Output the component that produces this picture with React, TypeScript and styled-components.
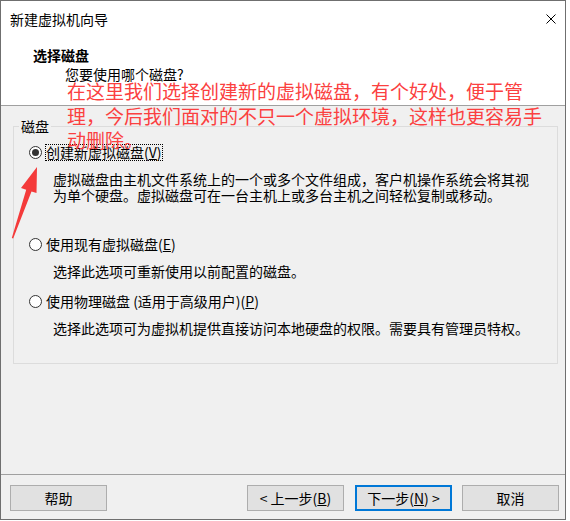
import styled, { createGlobalStyle } from "styled-components";

const GlobalStyle = createGlobalStyle`
  body {
    margin: 0;
    background: #ffffff;
    font-family: "Noto Sans CJK SC", "Noto Sans", sans-serif;
    color: #000;
  }
`;

const options = [
  {
    label: "创建新虚拟磁盘",
    key: "V",
    checked: true,
    gap: 11,
    desc: "虚拟磁盘由主机文件系统上的一个或多个文件组成，客户机操作系统会将其视为单个硬盘。虚拟磁盘可在一台主机上或多台主机之间轻松复制或移动。",
  },
  {
    label: "使用现有虚拟磁盘",
    key: "E",
    checked: false,
    gap: 33,
    desc: "选择此选项可重新使用以前配置的磁盘。",
  },
  {
    label: "使用物理磁盘 (适用于高级用户)",
    key: "P",
    checked: false,
    gap: 14,
    desc: "选择此选项可为虚拟机提供直接访问本地硬盘的权限。需要具有管理员特权。",
  },
];

const App = () => {
  return (
    <>
      <GlobalStyle />
      <Window>
        <TitleBar>
          <WindowTitle>新建虚拟机向导</WindowTitle>
          <CloseIcon width="10" height="10" viewBox="0 0 10 10">
            <path d="M0.5 0.5 L9.5 9.5 M9.5 0.5 L0.5 9.5" stroke="#000" strokeWidth="1" />
          </CloseIcon>
        </TitleBar>
        <Header>
          <Heading>选择磁盘</Heading>
          <SubHeading>您要使用哪个磁盘?</SubHeading>
        </Header>
        <Body>
          <GroupBox>
            <GroupLabel>磁盘</GroupLabel>
            {options.map((o) => (
              <Option key={o.key}>
                <OptionRow $gap={o.gap}>
                  <Radio $checked={o.checked} />
                  <OptionText $focused={o.checked}>
                    {o.label}(<u>{o.key}</u>)
                  </OptionText>
                </OptionRow>
                <Desc>{o.desc}</Desc>
              </Option>
            ))}
          </GroupBox>
        </Body>
        <Footer>
          <Button>帮助</Button>
          <Spacer />
          <Button>
            &lt; 上一步(<u>B</u>)
          </Button>
          <Button $primary>
            下一步(<u>N</u>) &gt;
          </Button>
          <Button>取消</Button>
        </Footer>

        <Annotation>
          在这里我们选择创建新的虚拟磁盘，有个好处，便于管
          <br />
          理，今后我们面对的不只一个虚拟环境，这样也更容易手
          <br />
          动删除。
        </Annotation>
        <Arrow width="60" height="250" viewBox="0 0 60 250">
          <polygon
            points="37,167 36.5,193 31.5,191.5 13.2,238.5 11.8,238 26.2,189.8 21,188"
            fill="#f43a3a"
          />
        </Arrow>
      </Window>
    </>
  );
};

export default App;

const Window = styled.div`
  position: relative;
  width: 566px;
  height: 520px;
  box-sizing: border-box;
  border: 1px solid #6f6f6f;
  background: #f0f0f0;
  display: flex;
  flex-direction: column;
  font-size: 14px;
`;

const TitleBar = styled.div`
  height: 36px;
  flex-shrink: 0;
  display: flex;
  align-items: center;
  justify-content: space-between;
  padding: 0 9px 0 9px;
  background: #fff;
`;

const WindowTitle = styled.span`
  font-size: 14px;
  line-height: 16px;
`;

const CloseIcon = styled.svg`
  display: block;
`;

const Header = styled.div`
  height: 58px;
  flex-shrink: 0;
  padding-top: 10px;
  background: #fff;
  border-bottom: 1px solid #a0a0a0;
`;

const Heading = styled.div`
  padding-left: 32px;
  font-weight: 700;
  line-height: 16px;
`;

const SubHeading = styled.div`
  padding-left: 64px;
  margin-top: 3px;
  line-height: 16px;
`;

const Body = styled.div`
  flex: 1;
  padding: 20px 0 0 12px;
`;

const GroupBox = styled.div`
  width: 545px;
  height: 238px;
  box-sizing: border-box;
  border: 1px solid #dcdcdc;
`;

const GroupLabel = styled.div`
  width: fit-content;
  margin: -8px 0 0 5px;
  padding: 0 2px;
  line-height: 14px;
  background: #f0f0f0;
`;

const Option = styled.div``;

const OptionRow = styled.div<{ $gap: number }>`
  display: flex;
  align-items: center;
  height: 17px;
  margin: ${({ $gap }) => $gap}px 0 0 15px;
`;

const Radio = styled.span<{ $checked: boolean }>`
  width: 13px;
  height: 13px;
  box-sizing: border-box;
  border-radius: 50%;
  border: 1px solid #333;
  background: #fff;
  margin-right: 3px;
  display: flex;
  align-items: center;
  justify-content: center;

  &::after {
    content: "";
    width: 7px;
    height: 7px;
    border-radius: 50%;
    background: #333;
    display: ${({ $checked }) => ($checked ? "block" : "none")};
  }
`;

const OptionText = styled.span<{ $focused: boolean }>`
  line-height: 15px;
  white-space: nowrap;
  border: 1px ${({ $focused }) => ($focused ? "dotted #000" : "solid transparent")};
`;

const Desc = styled.div`
  margin: 10px 0 0 39px;
  max-width: 482px;
  line-height: 16px;
`;

const Footer = styled.div`
  flex-shrink: 0;
  display: flex;
  gap: 11px;
  padding: 10px 6px 8px 9px;
  border-top: 1px solid #a0a0a0;
`;

const Spacer = styled.div`
  flex: 1;
`;

const Button = styled.button<{ $primary?: boolean }>`
  width: 97px;
  height: 26px;
  box-sizing: border-box;
  padding: 0;
  background: #e1e1e1;
  border: ${({ $primary }) => ($primary ? "2px solid #0078d7" : "1px solid #adadad")};
  font-family: inherit;
  font-size: 14px;
  color: #000;
  white-space: nowrap;

  &:last-child {
    margin-left: -1px;
  }
`;

const Annotation = styled.div`
  position: absolute;
  left: 66px;
  top: 78px;
  font-size: 19px;
  line-height: 24.5px;
  color: #fb4040;
  white-space: nowrap;
`;

const Arrow = styled.svg`
  position: absolute;
  left: -1px;
  top: -1px;
`;
